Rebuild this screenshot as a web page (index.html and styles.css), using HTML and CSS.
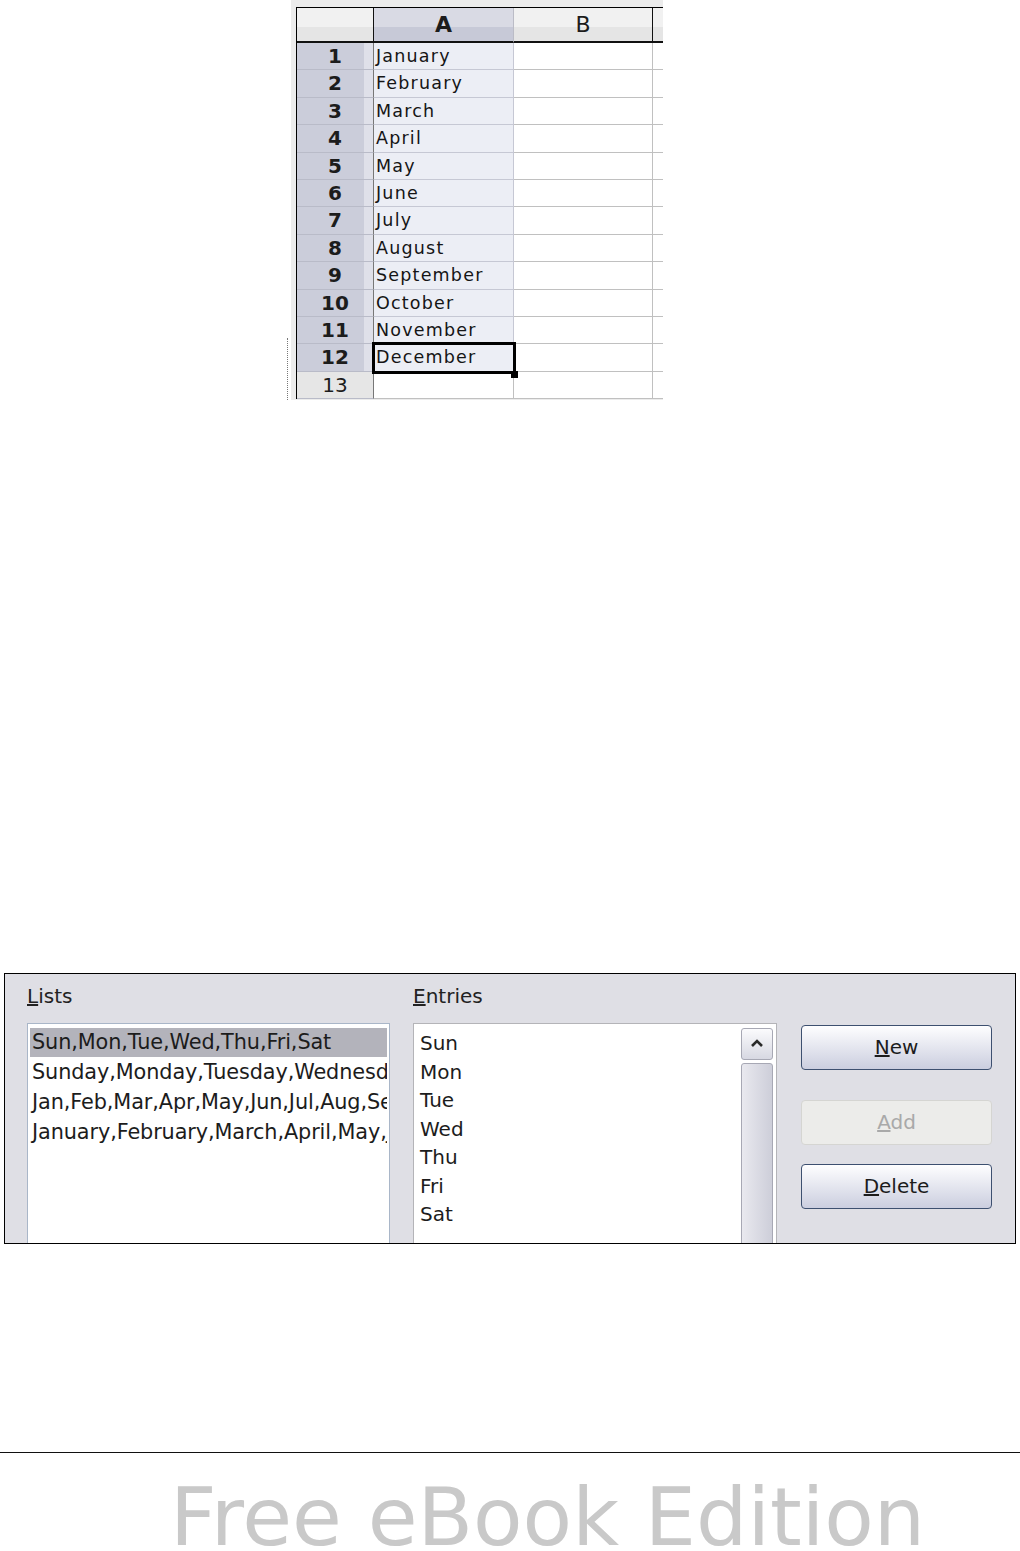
FILE: index.html
```html
<!doctype html>
<html lang="en">
<head>
    <meta charset="utf-8">
    <title>Sort lists</title>
    <link rel="stylesheet" href="styles.css">
</head>
<body>
    <!-- spreadsheet: months filled down column A -->
    <div class="sheet-wrap">
        <div class="grip"></div>
        <div class="sheet">
            <div class="grid">
                <div class="corner"></div>
                <div class="colhead sel">A</div>
                <div class="colhead">B</div>
                <div class="colhead last"></div>

                <div class="rowhead sel">1</div><div class="cell sel">January</div><div class="cell"></div><div class="cell"></div>
                <div class="rowhead sel">2</div><div class="cell sel">February</div><div class="cell"></div><div class="cell"></div>
                <div class="rowhead sel">3</div><div class="cell sel">March</div><div class="cell"></div><div class="cell"></div>
                <div class="rowhead sel">4</div><div class="cell sel">April</div><div class="cell"></div><div class="cell"></div>
                <div class="rowhead sel">5</div><div class="cell sel">May</div><div class="cell"></div><div class="cell"></div>
                <div class="rowhead sel">6</div><div class="cell sel">June</div><div class="cell"></div><div class="cell"></div>
                <div class="rowhead sel">7</div><div class="cell sel">July</div><div class="cell"></div><div class="cell"></div>
                <div class="rowhead sel">8</div><div class="cell sel">August</div><div class="cell"></div><div class="cell"></div>
                <div class="rowhead sel">9</div><div class="cell sel">September</div><div class="cell"></div><div class="cell"></div>
                <div class="rowhead sel">10</div><div class="cell sel">October</div><div class="cell"></div><div class="cell"></div>
                <div class="rowhead sel">11</div><div class="cell sel">November</div><div class="cell"></div><div class="cell"></div>
                <div class="rowhead sel">12</div><div class="cell sel cursor">December</div><div class="cell"></div><div class="cell"></div>
                <div class="rowhead">13</div><div class="cell"></div><div class="cell"></div><div class="cell"></div>
            </div>
        </div>
    </div>

    <!-- sort lists dialog -->
    <div class="dialog">
        <div class="col lists-col">
            <div class="label"><u>L</u>ists</div>
            <div class="listbox lists">
                <div class="item selected">Sun,Mon,Tue,Wed,Thu,Fri,Sat</div>
                <div class="item">Sunday,Monday,Tuesday,Wednesday,Thursday,Friday,Saturday</div>
                <div class="item">Jan,Feb,Mar,Apr,May,Jun,Jul,Aug,Sep,Oct,Nov,Dec</div>
                <div class="item">January,February,March,April,May,June,July</div>
            </div>
        </div>
        <div class="col entries-col">
            <div class="label"><u>E</u>ntries</div>
            <div class="listbox entries">
                <div class="entry-items">
                    <div class="entry">Sun</div>
                    <div class="entry">Mon</div>
                    <div class="entry">Tue</div>
                    <div class="entry">Wed</div>
                    <div class="entry">Thu</div>
                    <div class="entry">Fri</div>
                    <div class="entry">Sat</div>
                </div>
                <div class="scrollbar">
                    <div class="scroll-up">
                        <svg width="14" height="10" viewBox="0 0 14 10"><path d="M2 8 L7 3 L12 8" fill="none" stroke="#2a2a2a" stroke-width="2.6"/></svg>
                    </div>
                    <div class="scroll-track"></div>
                </div>
            </div>
        </div>
        <div class="buttons">
            <div class="btn"><u>N</u>ew</div>
            <div class="btn disabled"><u>A</u>dd</div>
            <div class="btn"><u>D</u>elete</div>
        </div>
    </div>

    <div class="footer">
        <div class="footer-text">Free eBook Edition</div>
    </div>
</body>
</html>
```

FILE: styles.css
```css
* {
    margin: 0;
    padding: 0;
    box-sizing: border-box;
}

body {
    background: #fff;
    font-family: "DejaVu Sans", sans-serif;
    color: #1c1c1c;
}

/* ---------- spreadsheet ---------- */

.sheet-wrap {
    display: flex;
    margin-left: 285px;
}

.grip {
    align-self: flex-end;
    width: 4px;
    height: 62px;
    margin-left: 2px;
    border-left: 1px dotted #777;
}

.sheet {
    width: 372px;
    height: 400px;
    overflow: hidden;
    background: #ececec;
    padding: 7px 0 0 5px;
}

.grid {
    display: grid;
    grid-template-columns: 77px 140px 139px 40px;
    grid-template-rows: 35px repeat(13, 27.4px);
    border-top: 1px solid #000;
    border-left: 1px solid #000;
    background: #fff;
}

.corner,
.colhead {
    border-bottom: 2px solid #111;
    background: linear-gradient(#f1f1f1 57%, #e5e5e5 57%);
    font-size: 22px;
    line-height: 34px;
    text-align: center;
}

.corner {
    border-right: 1px solid #111;
}

.colhead {
    border-right: 1px solid #bbbcc6;
}

.colhead.sel {
    background: linear-gradient(#d9dae4 57%, #c7c9d7 57%);
    font-weight: bold;
}

.colhead.last {
    border-left: 1px solid #111;
    margin-left: -1px;
}

.rowhead {
    border-right: 1px solid #777;
    border-bottom: 1px solid #b9bbc8;
    background: #e6e6e6;
    font-size: 20px;
    line-height: 27px;
    text-align: center;
}

.rowhead.sel {
    background: linear-gradient(to right, #cbcdda 88%, #dfe0e9 88%);
    font-weight: bold;
}

.cell {
    border-right: 1px solid #c0c0c0;
    border-bottom: 1px solid #c0c0c0;
    padding-left: 2px;
    font-size: 17.5px;
    letter-spacing: 1.2px;
    line-height: 27px;
    white-space: nowrap;
    color: #151515;
}

.cell.sel {
    background: #eceef5;
    border-right-color: #c6c8d4;
    border-bottom-color: #c6c8d4;
}

.cell.cursor {
    position: relative;
    z-index: 1;
    outline: 3px solid #000;
    outline-offset: -1px;
}

.cell.cursor::after {
    content: "";
    position: absolute;
    right: -5px;
    bottom: -7px;
    width: 7px;
    height: 7px;
    background: #000;
}

/* ---------- dialog ---------- */

.dialog {
    display: flex;
    margin: 573px 0 0 4px;
    width: 1012px;
    height: 271px;
    overflow: hidden;
    border: 1px solid #000;
    background: #dfdfe5;
    padding: 7px 0 0 22px;
}

.col {
    width: 363px;
}

.entries-col {
    width: 364px;
    margin-left: 23px;
}

.label {
    height: 30px;
    margin-bottom: 12px;
    font-size: 20px;
    line-height: 30px;
    color: #222;
}

.listbox {
    height: 260px;
    overflow: hidden;
    background: #fff;
    border: 1px solid #a9b6c8;
}

.lists {
    padding: 4px 2px 0 2px;
}

.item {
    height: 30px;
    padding-left: 2px;
    font-size: 20.8px;
    letter-spacing: -0.1px;
    line-height: 28px;
    white-space: nowrap;
    overflow: hidden;
}

.item.selected {
    height: 29px;
    margin-bottom: 1px;
    background: #b3b3bb;
}

.entries {
    display: flex;
    border-color: #b4b4b8;
}

.entry-items {
    flex: 1;
    padding: 5px 0 0 6px;
}

.entry {
    height: 28.5px;
    font-size: 20px;
    line-height: 28px;
}

.scrollbar {
    width: 32px;
    margin: 4px 3px 0 0;
}

.scroll-up {
    height: 32px;
    border: 1px solid #a7a8b4;
    border-radius: 3px;
    background: linear-gradient(#fbfbfd, #d7d8e2);
    display: flex;
    justify-content: center;
    align-items: center;
    padding-bottom: 3px;
}

.scroll-track {
    height: 220px;
    margin-top: 3px;
    border: 1px solid #a7a8b4;
    border-radius: 3px;
    background: linear-gradient(to right, #e9e9ef, #cdced9);
}

.buttons {
    width: 191px;
    margin-left: 24px;
    padding-top: 44px;
}

.btn {
    height: 45px;
    border: 1px solid #3d5070;
    border-radius: 4px;
    background: linear-gradient(#fefeff, #cbcedf);
    font-size: 20px;
    line-height: 43px;
    text-align: center;
    color: #1c1c1c;
}

.btn.disabled {
    margin: 30px 0 19px;
    border-color: #d5d5d2;
    background: #ececea;
    color: #a9a9a9;
}

/* ---------- footer ---------- */

.footer {
    margin-top: 208px;
    border-top: 1px solid #111;
    padding: 17px 0 0 170px;
}

.footer-text {
    font-size: 81px;
    line-height: 94px;
    color: #c9c9c9;
    white-space: nowrap;
}
```
